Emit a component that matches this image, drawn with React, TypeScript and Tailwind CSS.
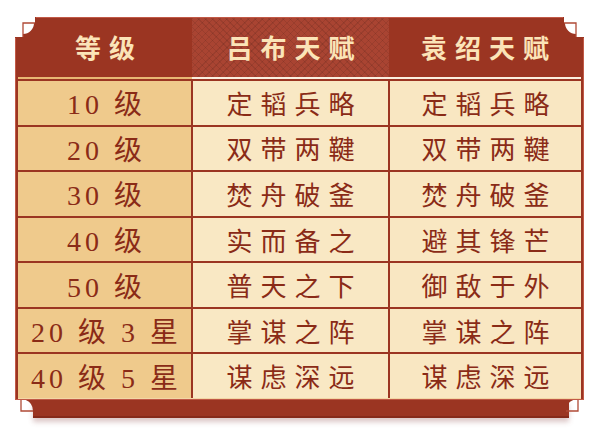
import React from "react";

const rows = [
  ["10 级", "定韬兵略", "定韬兵略"],
  ["20 级", "双带两鞬", "双带两鞬"],
  ["30 级", "焚舟破釜", "焚舟破釜"],
  ["40 级", "实而备之", "避其锋芒"],
  ["50 级", "普天之下", "御敌于外"],
  ["20 级 3 星", "掌谋之阵", "掌谋之阵"],
  ["40 级 5 星", "谋虑深远", "谋虑深远"],
];

const font = { fontFamily: '"Liberation Serif", "Noto Sans CJK SC", serif' };

// corner notch of the frame (top-left orientation)
const TopCorner = ({ className }: { className: string }) => (
  <svg width="21" height="21" viewBox="0 0 21 21" className={className}>
    <rect x="0" y="0" width="21" height="21" fill="#ffffff" />
    <path d="M20 0H21V21H0V20H8V17A11 11 0 0 0 19 6H20Z" fill="#9b3522" />
    <path d="M8 20V6H20" fill="none" stroke="#b04a36" strokeWidth="1.3" />
  </svg>
);

const BottomCorner = ({ className }: { className: string }) => (
  <svg width="20" height="14" viewBox="0 0 20 14" className={className}>
    <path d="M10.8 0H18V11A12 12 0 0 0 10.8 0Z" fill="#9b3522" />
    <path d="M6 0V11H18" fill="none" stroke="#b04a36" strokeWidth="1.3" />
  </svg>
);

export default function App() {
  return (
    <div className="w-[600px] h-[435px] bg-white pt-[17px] pl-[15px]" style={font}>
      <div className="relative w-[569px]">
        <div className="bg-[#9b3522] border border-[#c25a47] px-[2px]">
          {/* header */}
          <div className="grid grid-cols-[174px_197px_192px] h-[59px] text-[#fbe4b8] text-[26px] font-bold tracking-[8px]">
            <div className="flex items-center justify-center pl-[8px] pt-[4px]">等级</div>
            <div className="flex items-center justify-center pl-[8px] pt-[4px] bg-[#a94432] bg-[image:repeating-linear-gradient(45deg,rgba(0,0,0,0.09)_0px,rgba(0,0,0,0.09)_1px,transparent_1px,transparent_5px),repeating-linear-gradient(-45deg,rgba(0,0,0,0.09)_0px,rgba(0,0,0,0.09)_1px,transparent_1px,transparent_5px)]">
              吕布天赋
            </div>
            <div className="flex items-center justify-center pl-[8px] pt-[4px]">袁绍天赋</div>
          </div>
          <div className="grid grid-cols-[174px_389px] h-[2px]">
            <div className="bg-[#e9b774]" />
            <div className="bg-[#fbefdf]" />
          </div>
          <div className="h-[2px]" />
          {/* body rows */}
          <div className="grid grid-cols-[173px_195px_191px] grid-rows-7 gap-[2px] h-[317px] text-[#8a2b17]">
            {rows.map((r, i) => (
              <React.Fragment key={i}>
                <div className="flex items-center justify-center pl-[4px] pt-[5px] text-[28px] tracking-[4px] bg-[#efca8c]">
                  {r[0]}
                </div>
                <div className="flex items-center justify-center pl-[8px] pt-[5px] text-[26px] tracking-[8px] bg-[#f9e8c4]">
                  {r[1]}
                </div>
                <div className="flex items-center justify-center pl-[8px] pt-[5px] text-[26px] tracking-[8px] bg-[#f9e7c2]">
                  {r[2]}
                </div>
              </React.Fragment>
            ))}
          </div>
          <div className="h-[1px] bg-[#f3d7a6]" />
        </div>
        {/* bottom strip */}
        <div className="ml-[18px] mr-[15px] h-[18px] bg-[#9b3522] border-b-2 border-[#862a1a] shadow-[0_4px_5px_rgba(140,70,70,0.3)]" />

        <TopCorner className="absolute left-0 top-0" />
        <TopCorner className="absolute right-0 top-0 -scale-x-100" />
        <BottomCorner className="absolute left-0 top-[383px]" />
        <BottomCorner className="absolute right-0 top-[383px] -scale-x-100" />
      </div>
    </div>
  );
}
